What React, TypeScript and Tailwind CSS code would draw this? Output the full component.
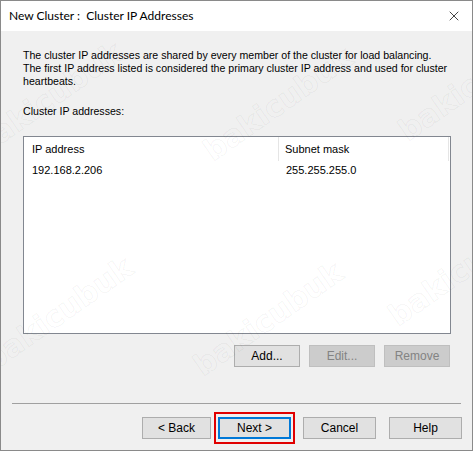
import { X } from "lucide-react";

const marks = [
  { left: "-40px", top: "75px" },
  { left: "190px", top: "80px" },
  { left: "385px", top: "60px" },
  { left: "-30px", top: "290px" },
  { left: "180px", top: "295px" },
  { left: "375px", top: "245px" },
];

const Btn = ({ label, disabled, primary, w = "w-[66px]" }: { label: string; disabled?: boolean; primary?: boolean; w?: string }) => {
  const base = "h-[22px] flex items-center justify-center text-[12px] leading-none";
  if (disabled) {
    return <div className={`${base} ${w} bg-[#cccccc] border border-[#bfbfbf] text-[#838383]`}>{label}</div>;
  }
  if (primary) {
    return <div className={`${base} ${w} bg-[#e1e1e1] border-2 border-[#0078d7] text-black`}>{label}</div>;
  }
  return <div className={`${base} ${w} bg-[#e1e1e1] border border-[#adadad] text-black`}>{label}</div>;
};

export default function App() {
  return (
    <div className="relative w-[473px] h-[451px] overflow-hidden border border-[#8a8a8a] bg-[#f0f0f0] font-['Liberation_Sans',Arial,sans-serif] text-[11px] text-black">
      {/* title bar */}
      <div className="h-[30px] bg-white flex items-center justify-between pl-[8px] pr-[10px]">
        <span className="whitespace-pre text-[12px] font-['Lato',sans-serif] text-black">New Cluster :  Cluster IP Addresses</span>
        <X size={16} strokeWidth={1.1} className="text-black" />
      </div>

      <div className="pl-[22px] pr-[21px] pt-[18px]">
        <p className="leading-[13px] text-[10.6px]">
          The cluster IP addresses are shared by every member of the cluster for load balancing.
          <br />
          The first IP address listed is considered the primary cluster IP address and used for cluster
          <br />
          heartbeats.
        </p>
        <p className="mt-[17px] leading-[13px] text-[10.6px]">Cluster IP addresses:</p>

        {/* list view */}
        <div className="mt-[18px] h-[198px] border border-[#828790] bg-white">
          <div className="flex h-[24px] items-center">
            <div className="w-[255px] h-full flex items-center pl-[8px] border-r border-[#e5e5e5]">IP address</div>
            <div className="flex-1 h-full flex items-center pl-[6px] border-r border-[#e5e5e5] mr-[1px]">Subnet mask</div>
          </div>
          <div className="flex h-[19px] items-center">
            <div className="w-[255px] pl-[8px]">192.168.2.206</div>
            <div className="flex-1 pl-[7px]">255.255.255.0</div>
          </div>
        </div>

        <div className="mt-[11px] flex justify-end gap-[9px] pr-[1px]">
          <Btn label="Add..." />
          <Btn label="Edit..." disabled />
          <Btn label="Remove" disabled />
        </div>
      </div>

      {/* separator */}
      <div className="mt-[36px] mx-[11px] border-t border-[#a0a0a0]" />

      <div className="mt-[8px] flex justify-end items-center pr-[10px]">
        <Btn label="< Back" w="w-[69px]" />
        <div className="ml-[3px] px-[2px] py-[3px] border-2 border-[#e00000]">
          <Btn label="Next >" primary w="w-[73px]" />
        </div>
        <div className="ml-[8px]">
          <Btn label="Cancel" w="w-[73px]" />
        </div>
        <div className="ml-[13px]">
          <Btn label="Help" w="w-[73px]" />
        </div>
      </div>

      {/* watermark */}
      {marks.map((m, i) => (
        <span
          key={i}
          className="pointer-events-none absolute rotate-[-35deg] text-[30px] font-bold font-['DejaVu_Sans',sans-serif] text-transparent [-webkit-text-stroke:1px_rgba(0,0,0,0.05)]"
          style={{ left: m.left, top: m.top }}
        >
          bakicubuk
        </span>
      ))}
    </div>
  );
}
